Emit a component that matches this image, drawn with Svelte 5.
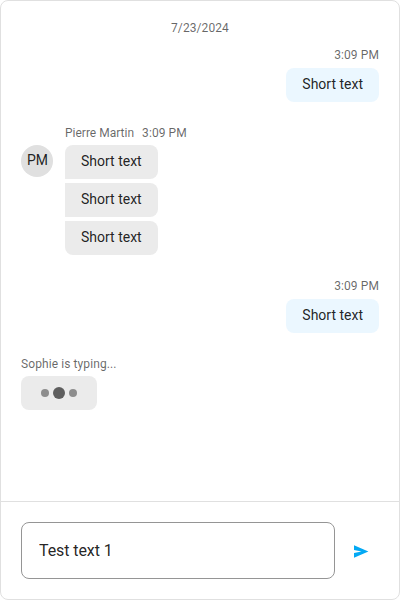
<script>
  let message = $state('Test text 1');
  const replies = ['Short text', 'Short text', 'Short text'];
</script>

<main class="chat">
  <section class="messages">
    <div class="day">7/23/2024</div>

    <div class="group own first">
      <div class="info"><span>3:09 PM</span></div>
      <div class="bubble">Short text</div>
    </div>

    <div class="group other">
      <div class="avatar">PM</div>
      <div class="content">
        <div class="info"><span class="name">Pierre Martin</span><span>3:09 PM</span></div>
        {#each replies as text}
          <div class="bubble">{text}</div>
        {/each}
      </div>
    </div>

    <div class="group own last">
      <div class="info"><span>3:09 PM</span></div>
      <div class="bubble">Short text</div>
    </div>

    <div class="typing">
      <div class="info">Sophie is typing...</div>
      <div class="dots"><i></i><i class="big"></i><i></i></div>
    </div>
  </section>

  <footer>
    <input type="text" aria-label="Message" bind:value={message} />
    <button aria-label="Send">
      <svg width="18" height="18" viewBox="0 0 18 18">
        <path d="M2 3.2 L16.4 9.5 L2 15.8 V11 L9.5 9.5 L2 8 Z" fill="#03a9f4" />
      </svg>
    </button>
  </footer>
</main>

<style>
  .chat {
    box-sizing: border-box;
    width: 400px;
    height: 600px;
    display: flex;
    flex-direction: column;
    border: 1px solid #e0e0e0;
    border-radius: 8px;
    background: #fff;
    color: rgba(0, 0, 0, 0.87);
    font: 14px/18px Roboto, sans-serif;
    overflow: hidden;
  }
  .messages {
    flex: 1;
    padding: 19px 20px 0;
  }
  .day,
  .info {
    font-size: 12px;
    line-height: 16px;
    letter-spacing: 0.09px;
    color: rgba(0, 0, 0, 0.6);
  }
  .day {
    text-align: center;
  }
  .group {
    display: flex;
  }
  .own {
    flex-direction: column;
    align-items: flex-end;
  }
  .first {
    margin-top: 11px;
  }
  .own .info {
    margin-bottom: 5px;
  }
  .bubble {
    box-sizing: border-box;
    height: 34px;
    padding: 7px 16px 9px;
    border-radius: 8px;
    background: #ebebeb;
    white-space: nowrap;
  }
  .own .bubble {
    background: #ebf7ff;
  }
  .other {
    margin-top: 23px;
    gap: 12px;
  }
  .avatar {
    box-sizing: border-box;
    width: 32px;
    height: 32px;
    margin-top: 20px;
    padding-left: 1px;
    border-radius: 50%;
    background: #e0e0e0;
    text-align: center;
    line-height: 31px;
  }
  .content {
    display: flex;
    flex-direction: column;
    align-items: flex-start;
    gap: 4px;
  }
  .content .info {
    display: flex;
    gap: 8px;
  }
  .name {
    letter-spacing: 0;
  }
  .content .bubble:not(:last-child) {
    border-bottom-left-radius: 0;
  }
  .content .bubble + .bubble {
    border-top-left-radius: 0;
  }
  .last {
    margin-top: 23px;
  }
  .typing {
    margin-top: 23px;
  }
  .dots {
    display: flex;
    align-items: center;
    justify-content: center;
    gap: 4px;
    width: 76px;
    height: 34px;
    margin-top: 4px;
    border-radius: 8px;
    background: #ebebeb;
  }
  .dots i {
    width: 8px;
    height: 8px;
    border-radius: 50%;
    background: #8d8d8d;
  }
  .dots .big {
    width: 12px;
    height: 12px;
    background: #5e5e5e;
  }
  footer {
    box-sizing: border-box;
    height: 98px;
    display: flex;
    align-items: center;
    gap: 8px;
    padding: 0 20px;
    border-top: 1px solid #e0e0e0;
  }
  input {
    box-sizing: border-box;
    width: 314px;
    height: 57px;
    padding: 0 17px;
    border: 1px solid #959595;
    border-radius: 8px;
    background: transparent;
    color: inherit;
    font: 16px/20px Roboto, sans-serif;
    letter-spacing: -0.09px;
    outline: none;
  }
  button {
    display: flex;
    align-items: center;
    justify-content: center;
    width: 36px;
    height: 36px;
    padding: 0;
    border: 0;
    background: none;
  }
</style>
